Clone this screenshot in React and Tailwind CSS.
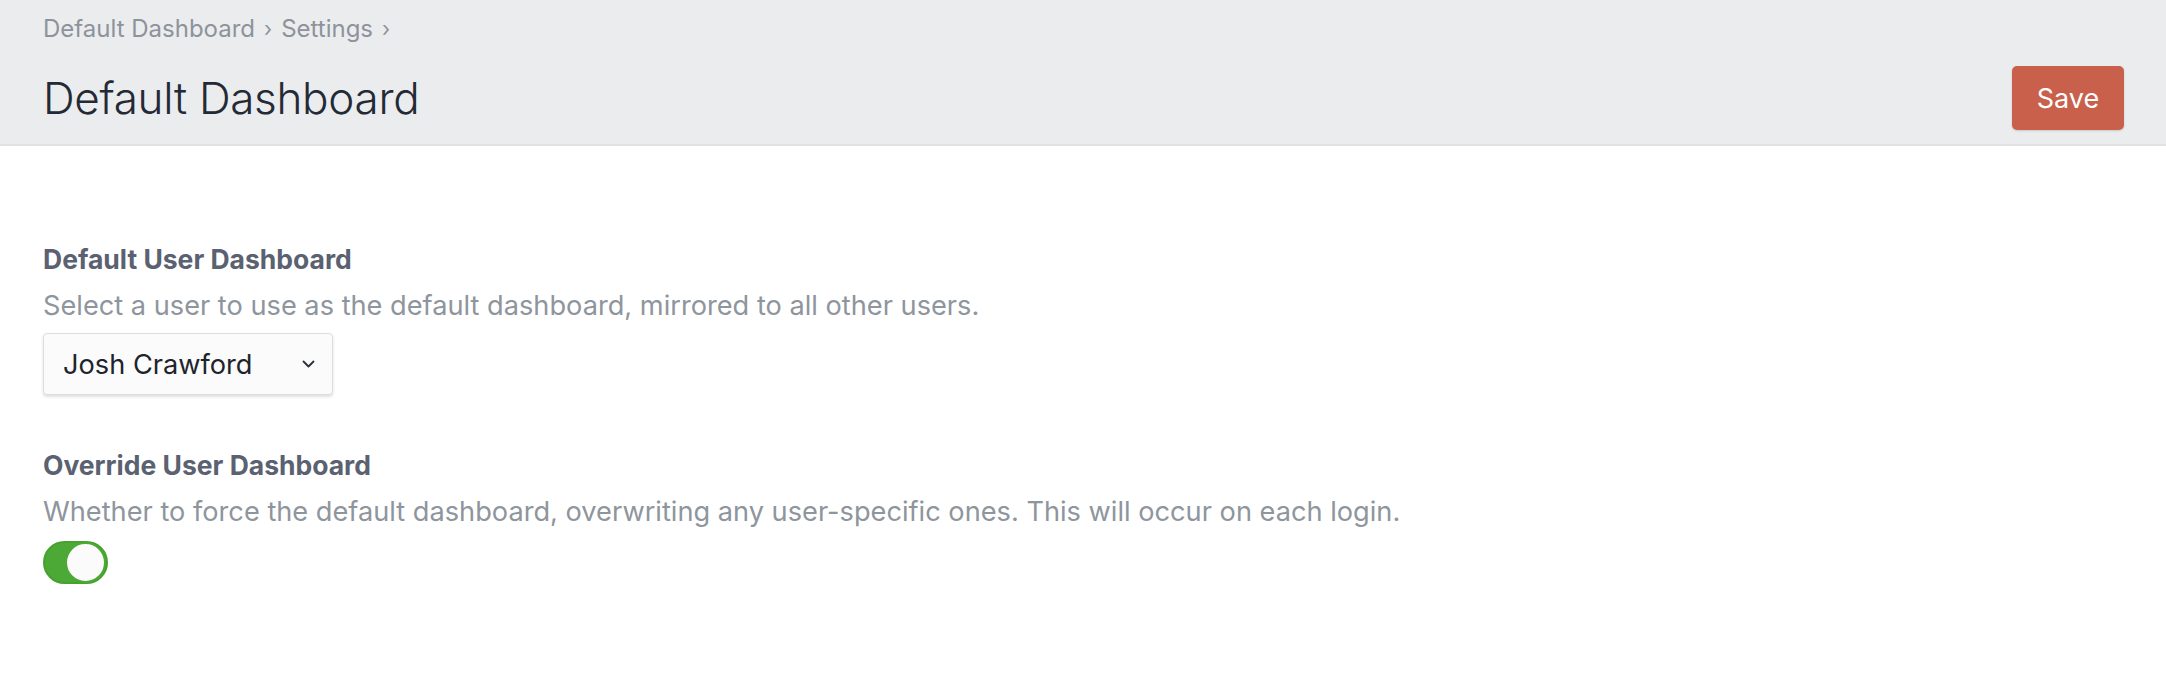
export default function App() {
  return (
    <div className="min-h-[700px] bg-white" style={{ fontFamily: 'Inter, "Noto Sans", sans-serif' }}>
      <header className="h-[146px] bg-[#ebecee] border-b-2 border-[#e1e2e4] px-[43px] flex items-start justify-between">
        <div className="flex flex-col">
          <nav className="mt-[14px] flex items-center gap-[9px] text-[24px] leading-[30px] text-[#8d939b]">
            <span>Default Dashboard</span>
            <span className="text-[21px]">›</span>
            <span>Settings</span>
            <span className="text-[21px]">›</span>
          </nav>
          <h1 className="mt-[26px] text-[44px] leading-[56px] font-light text-[#232a35] tracking-[-0.3px]">Default Dashboard</h1>
        </div>
        <button className="mt-[66px] mr-[-1px] w-[112px] h-[64px] rounded-[5px] bg-[#c9604c] text-white text-[27px] pt-[2px] shadow-[0_1px_2px_rgba(0,0,0,0.15)]">
          Save
        </button>
      </header>
      <main className="px-[43px] pt-[96px]">
        <section className="flex flex-col">
          <h2 className="text-[26.5px] leading-[34px] font-bold text-[#5a6170]">Default User Dashboard</h2>
          <p className="mt-[13px] text-[27.2px] leading-[34px] text-[#8e959d]">Select a user to use as the default dashboard, mirrored to all other users.</p>
          <div className="mt-[10px] w-[290px] h-[62px] rounded-[4px] border border-[#dcdde0] bg-[#fbfbfb] shadow-[0_2px_3px_rgba(0,0,0,0.12)] flex items-center justify-between pl-[19px] pr-[17px]">
            <span className="text-[27.2px] text-[#1f242c] pt-[2px]">Josh Crawford</span>
            <svg width="13" height="8" viewBox="0 0 13 8" fill="none">
              <path d="M1.5 1.5 L6.5 6.5 L11.5 1.5" stroke="#2a2f38" strokeWidth="1.8" strokeLinecap="round" strokeLinejoin="round" />
            </svg>
          </div>
        </section>
        <section className="mt-[53px] flex flex-col">
          <h2 className="text-[26.5px] leading-[34px] font-bold text-[#5a6170]">Override User Dashboard</h2>
          <p className="mt-[13px] text-[27.2px] leading-[34px] text-[#8e959d]">Whether to force the default dashboard, overwriting any user-specific ones. This will occur on each login.</p>
          <div className="mt-[12px] w-[65px] h-[43px] rounded-full bg-[#4ca935] border-2 border-[#46a22f] flex items-center justify-end">
            <div className="w-[41px] h-[41px] rounded-full bg-[#fbfbfb] border-2 border-[#4ca935]" />
          </div>
        </section>
      </main>
    </div>
  );
}
